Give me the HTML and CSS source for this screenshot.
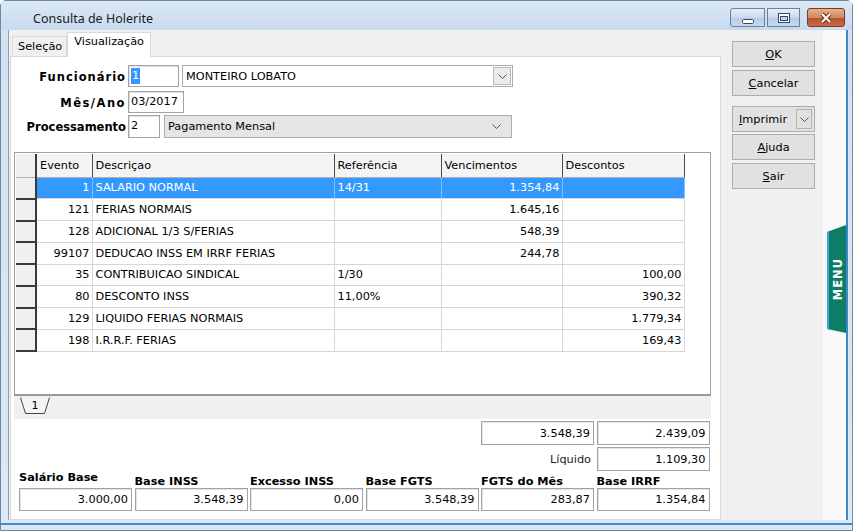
FILE: index.html
```html
<!DOCTYPE html>
<html lang="pt">
<head>
<meta charset="utf-8">
<title>Consulta de Holerite</title>
<link rel="stylesheet" href="styles.css">
</head>
<body>
<div class="window">
  <div class="titlebar">
    <span class="title">Consulta de Holerite</span>
    <div class="controls">
      <div class="cbtn min"><svg width="12" height="6" viewBox="0 0 12 6"><rect x="0.5" y="1.5" width="11" height="4" rx="1" fill="#fff" stroke="#3b4a5c"/></svg></div>
      <div class="cbtn max"><svg width="12" height="10" viewBox="0 0 12 10"><rect x="0.5" y="0.5" width="11" height="9" fill="#fff" stroke="#3b4a5c"/><rect x="2.5" y="3.5" width="7" height="4" fill="#c6d6e8" stroke="#3b4a5c"/></svg></div>
      <div class="cbtn close"><svg width="14" height="12" viewBox="0 0 14 12"><path d="M3 2 L11 10 M11 2 L3 10" stroke="#5a2a1a" stroke-width="4"/><path d="M3 2 L11 10 M11 2 L3 10" stroke="#fff" stroke-width="2.2"/></svg></div>
    </div>
  </div>
  <div class="client">
    <div class="left">
      <div class="tabs">
        <div class="tab">Seleção</div>
        <div class="tab active">Visualização</div>
      </div>
      <div class="page">
        <div class="form">
          <div class="frow r1">
            <span class="flabel l-func">Funcionário</span>
            <div class="field w-cod"><span class="selected">1</span></div>
            <div class="combo white w-nome"><span class="ctext">MONTEIRO LOBATO</span><span class="ddbtn"><svg width="9" height="5" viewBox="0 0 9 5"><path d="M0.5 0.5 L4.5 4.5 L8.5 0.5" stroke="#555" fill="none"/></svg></span></div>
          </div>
          <div class="frow r2">
            <span class="flabel l-mes">Mês/Ano</span>
            <div class="field w-mes">03/2017</div>
          </div>
          <div class="frow r3">
            <span class="flabel">Processamento</span>
            <div class="field w-proc">2</div>
            <div class="combo gray w-tipo"><span class="ctext">Pagamento Mensal</span><span class="ddplain"><svg width="9" height="5" viewBox="0 0 9 5"><path d="M0.5 0.5 L4.5 4.5 L8.5 0.5" stroke="#555" fill="none"/></svg></span></div>
          </div>
        </div>

        <div class="grid">
          <div class="gridbody">
            <table class="events">
              <colgroup>
                <col class="c-ind"><col class="c-ev"><col class="c-desc"><col class="c-ref"><col class="c-ven"><col class="c-des">
              </colgroup>
              <thead>
                <tr><th class="ind"></th><th>Evento</th><th>Descriçao</th><th>Referência</th><th>Vencimentos</th><th>Descontos</th></tr>
              </thead>
              <tbody>
                <tr class="sel"><td class="ind"></td><td class="num">1</td><td>SALARIO NORMAL</td><td>14/31</td><td class="num">1.354,84</td><td class="num"></td></tr>
                <tr><td class="ind"></td><td class="num">121</td><td>FERIAS NORMAIS</td><td></td><td class="num">1.645,16</td><td class="num"></td></tr>
                <tr><td class="ind"></td><td class="num">128</td><td>ADICIONAL 1/3 S/FERIAS</td><td></td><td class="num">548,39</td><td class="num"></td></tr>
                <tr><td class="ind"></td><td class="num">99107</td><td>DEDUCAO INSS EM IRRF FERIAS</td><td></td><td class="num">244,78</td><td class="num"></td></tr>
                <tr><td class="ind"></td><td class="num">35</td><td>CONTRIBUICAO SINDICAL</td><td>1/30</td><td class="num"></td><td class="num">100,00</td></tr>
                <tr><td class="ind"></td><td class="num">80</td><td>DESCONTO INSS</td><td>11,00%</td><td class="num"></td><td class="num">390,32</td></tr>
                <tr><td class="ind"></td><td class="num">129</td><td>LIQUIDO FERIAS NORMAIS</td><td></td><td class="num"></td><td class="num">1.779,34</td></tr>
                <tr><td class="ind"></td><td class="num">198</td><td>I.R.R.F. FERIAS</td><td></td><td class="num"></td><td class="num">169,43</td></tr>
              </tbody>
            </table>
          </div>
          <div class="gridtabs">
            <div class="ptab"><svg width="30" height="18" viewBox="0 0 30 18"><path d="M0.5 0.5 L5.5 16.5 L24.5 16.5 L29.5 0.5" fill="#f4f4f4" stroke="#444"/></svg><span class="ptab-label">1</span></div>
          </div>
        </div>

        <div class="totals">
          <div class="trow">
            <div class="box c5">3.548,39</div>
            <div class="box c6">2.439,09</div>
          </div>
          <div class="trow">
            <div class="tlabel c5">Líquido</div>
            <div class="box c6">1.109,30</div>
          </div>
          <div class="trow labels">
            <div class="blabel high">Salário Base</div>
            <div class="blabel">Base INSS</div>
            <div class="blabel">Excesso INSS</div>
            <div class="blabel">Base FGTS</div>
            <div class="blabel">FGTS do Mês</div>
            <div class="blabel">Base IRRF</div>
          </div>
          <div class="trow values">
            <div class="box">3.000,00</div>
            <div class="box">3.548,39</div>
            <div class="box">0,00</div>
            <div class="box">3.548,39</div>
            <div class="box">283,87</div>
            <div class="box">1.354,84</div>
          </div>
        </div>
      </div>
    </div>
    <div class="right">
      <div class="buttons">
        <div class="btn b-ok"><u>O</u>K</div>
        <div class="btn b-cancel"><u>C</u>ancelar</div>
        <div class="btn b-print"><span class="plabel"><u>I</u>mprimir</span><span class="pdrop"><svg width="9" height="5" viewBox="0 0 9 5"><path d="M0.5 0.5 L4.5 4.5 L8.5 0.5" stroke="#555" fill="none"/></svg></span></div>
        <div class="btn b-help"><u>A</u>juda</div>
        <div class="btn b-exit"><u>S</u>air</div>
      </div>
      <div class="strip">
        <div class="menutab"><span>MENU</span></div>
      </div>
    </div>
  </div>
  <div class="bottomline"></div>
</div>
</body>
</html>
```

FILE: styles.css
```css
* { box-sizing: border-box; }
html, body { margin: 0; padding: 0; }
body {
  width: 853px;
  height: 531px;
  overflow: hidden;
  background: #ffffff;
  font-family: "DejaVu Sans", Tahoma, sans-serif;
  font-size: 11.3px;
  color: #000;
}
.window {
  width: 853px;
  height: 531px;
  background: linear-gradient(#dbe7f4, #d3e2f2 40px, #dce8f5);
  border: 1px solid #6f879f;
  border-radius: 6px 6px 0 0;
  display: flex;
  flex-direction: column;
}
.titlebar {
  height: 29px;
  display: flex;
  align-items: center;
  background: linear-gradient(#dbe8f6, #c8daee);
}
.title {
  font-family: "Noto Sans", sans-serif;
  font-size: 12.5px;
  color: #1c1c1c;
  padding-left: 32px;
  padding-top: 5px;
  flex: 1;
}
.controls {
  display: flex;
  align-self: flex-start;
  margin-top: 7px;
  margin-right: 7px;
  gap: 2px;
}
.cbtn {
  height: 19px;
  border: 1px solid #6b7f99;
  display: flex;
  align-items: center;
  justify-content: center;
  background: linear-gradient(#e6eef8, #c9d9ec 50%, #b5cbe4 51%, #c8daee);
}
.cbtn.min { width: 35px; border-radius: 3px 0 0 3px; }
.cbtn.min svg { margin-top: 6px; }
.cbtn.max { width: 33px; }
.cbtn.close {
  width: 38px;
  margin-left: 5px;
  border-radius: 3px;
  border-color: #7a3b25;
  background: linear-gradient(#e8b08e, #d38864 50%, #b7532d 51%, #c66a45);
}
.client {
  flex: 1;
  margin-left: 7px;
  width: 840px;
  display: flex;
  background: #f0f0f0;
  border-left: 1px solid #8f9cab;
  border-right: 2px solid #3e88c9;
}
.left {
  width: 714px;
  display: flex;
  flex-direction: column;
}
.tabs {
  height: 26px;
  display: flex;
  align-items: flex-end;
  padding-left: 3px;
  position: relative;
  z-index: 1;
}
.tab {
  font-family: "DejaVu Sans", sans-serif;
  font-size: 11.3px;
  height: 20px;
  padding: 3px 4px 0 5px;
  border: 1px solid #d9d9d9;
  border-bottom: none;
  background: #f0f0f0;
  margin-bottom: 0;
}
.tab.active {
  height: 25px;
  background: #fff;
  padding: 2px 6px 0 6px;
  margin-bottom: -1px;
  border-color: #d9d9d9;
}
.page {
  flex: 1;
  margin-left: 1px;
  width: 711px;
  background: #fff;
  border: 1px solid #d9d9d9;
  display: flex;
  flex-direction: column;
}
.form {
  padding-top: 8px;
  display: flex;
  flex-direction: column;
}
.frow {
  display: flex;
  align-items: stretch;
  height: 22px;
}
.frow.r2 { margin-top: 4px; }
.frow.r3 { margin-top: 2px; height: 23px; }
.flabel {
  width: 115px;
  margin-right: 2px;
  text-align: right;
  font-weight: bold;
  font-size: 11.5px;
  align-self: center;
  padding-top: 1px;
  white-space: nowrap;
}
.l-func { letter-spacing: 1px; }
.l-mes { letter-spacing: 1.5px; }
.field {
  border: 1px solid #a3a3a3;
  box-shadow: inset 1px 1px 0 #e2e2e2;
  background: #fff;
  padding: 3px 2px 0 2px;
  white-space: nowrap;
}
.w-cod { width: 51px; }
.w-mes { width: 56px; }
.w-proc { width: 32px; }
.selected {
  background: #3399ff;
  color: #fff;
  padding: 1px 1px 2px 1px;
}
.combo {
  margin-left: 3px;
  border: 1px solid #adadad;
  display: flex;
  align-items: center;
  padding-left: 3px;
}
.combo.white { background: #fff; }
.combo.gray { background: #e5e5e5; margin-left: 4px; }
.w-nome { width: 331px; }
.w-tipo { width: 348px; }
.ctext { flex: 1; }
.ddbtn {
  width: 18px;
  height: 18px;
  margin-right: 1px;
  border: 1px solid #b9b9b9;
  background: #ececec;
  display: flex;
  align-items: center;
  justify-content: center;
}
.ddplain {
  width: 20px;
  margin-right: 5px;
  display: flex;
  justify-content: center;
}
.grid {
  margin-top: 14px;
  margin-left: 3px;
  width: 697px;
  display: flex;
  flex-direction: column;
}
.gridbody {
  height: 244px;
  background: #fff;
  border: 1px solid #a0a0a0;
  border-bottom: 2px solid #9a9a9a;
  padding: 1px 0 0 1px;
}
.events {
  border-collapse: collapse;
  table-layout: fixed;
  width: 668px;
}
.c-ind { width: 20px; }
.c-ev { width: 56px; }
.c-desc { width: 242px; }
.c-ref { width: 107px; }
.c-ven { width: 121px; }
.c-des { width: 122px; }
.events th {
  height: 23px;
  padding: 1px 3px 0 3px;
  font-weight: normal;
  text-align: left;
  background: #f4f4f4;
  border-right: 1px solid #4a4a4a;
  border-bottom: 1px solid #b0b0b0;
  white-space: nowrap;
}
.events tbody tr { height: 21.75px; }
.events td {
  padding: 0 3px;
  white-space: nowrap;
  overflow: hidden;
  border-right: 1px solid #d6d6d6;
  border-bottom: 1px solid #d6d6d6;
}
.events .ind {
  background: #f0f0f0;
  border-right: 2px solid #3a3a3a;
  border-bottom: 2px solid #3a3a3a;
  padding: 0;
}
.events th.ind { border-bottom: 1px solid #b0b0b0; }
.events td.num { text-align: right; padding-right: 2px; }
.events tr.sel td:not(.ind) {
  background: #3399ff;
  color: #fff;
  border-right-color: #80bfff;
  border-bottom-color: #d6d6d6;
}
.gridtabs {
  height: 23px;
  background: #f0f0f0;
  padding-left: 6px;
  padding-top: 1px;
}
.ptab {
  width: 30px;
  height: 18px;
  display: grid;
}
.ptab svg, .ptab-label { grid-area: 1 / 1; }
.ptab-label {
  text-align: center;
  font-size: 11px;
  padding-top: 2px;
}
.totals {
  padding-left: 8px;
  display: flex;
  flex-direction: column;
}
.trow {
  display: grid;
  grid-template-columns: repeat(6, 113px);
  column-gap: 2.5px;
  height: 24px;
  margin-top: 2px;
}
.trow.labels { height: 17px; margin-top: 0; align-items: end; }
.trow.values { height: 23px; margin-top: 0; }
.c5 { grid-column: 5; }
.c6 { grid-column: 6; }
.box {
  border: 1px solid #a3a3a3;
  box-shadow: inset 1px 1px 0 #e4e4e4;
  background: #fff;
  text-align: right;
  padding: 0 3px 0 0;
  display: flex;
  align-items: center;
  justify-content: flex-end;
}
.tlabel {
  display: flex;
  align-items: center;
  justify-content: flex-end;
  padding-right: 3px;
  color: #222;
}
.blabel {
  font-weight: bold;
  font-size: 11.3px;
  white-space: nowrap;
  padding-bottom: 0;
}
.blabel.high { padding-bottom: 4px; }
.right {
  flex: 1;
  display: flex;
}
.buttons {
  width: 100px;
  padding-top: 11px;
  padding-left: 9px;
  display: flex;
  flex-direction: column;
}
.btn {
  width: 83px;
  height: 26px;
  border: 1px solid #adadad;
  background: #e1e1e1;
  display: flex;
  align-items: center;
  justify-content: center;
}
.b-cancel { margin-top: 3px; }
.b-print { margin-top: 10px; justify-content: flex-start; padding-left: 6px; }
.b-help { margin-top: 2px; }
.b-exit { margin-top: 3px; }
.plabel { flex: 1; }
.pdrop {
  width: 16px;
  height: 20px;
  margin-right: 2px;
  border: 1px solid #b4b4b4;
  display: flex;
  align-items: center;
  justify-content: center;
}
.strip {
  flex: 1;
  background: #fafafa;
  position: relative;
}
.menutab {
  position: absolute;
  top: 195px;
  right: 0;
  width: 19px;
  height: 108px;
  background: #0d7d68;
  border-left: 2px solid #3fa3e0;
  clip-path: polygon(0 7px, 100% 0, 100% 100%, 0 calc(100% - 4px));
  display: flex;
  align-items: center;
  justify-content: center;
}
.menutab span {
  writing-mode: vertical-rl;
  transform: rotate(180deg);
  color: #fff;
  font-weight: bold;
  font-size: 11.5px;
  letter-spacing: 1px;
  font-family: "DejaVu Sans", sans-serif;
}
.bottomline {
  height: 2px;
  margin-top: 3px;
  margin-bottom: 5px;
  background: #3f8ec9;
}
```
